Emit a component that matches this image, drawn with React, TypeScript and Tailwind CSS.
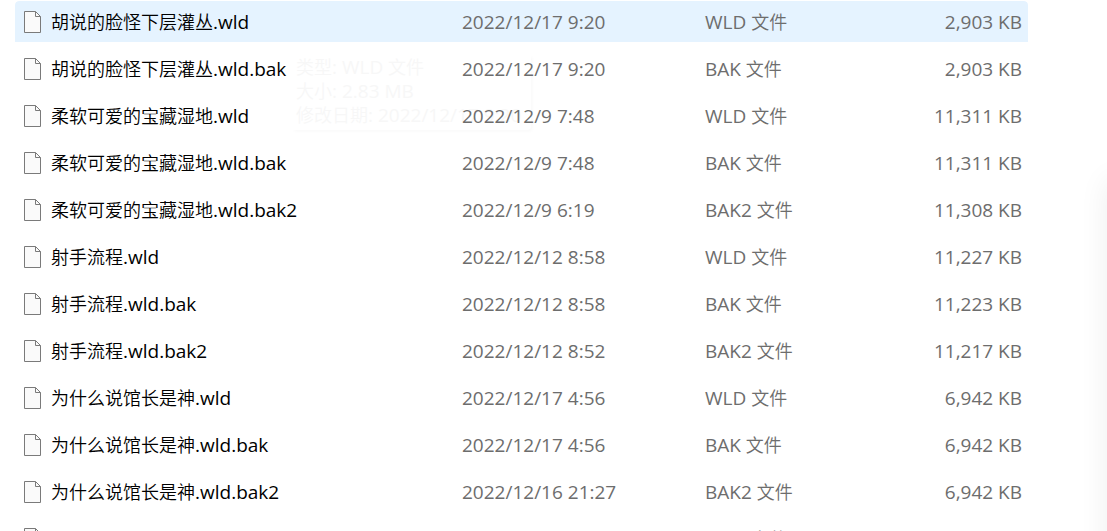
import { Fragment } from "react";

const files = [
  { name: "胡说的脸怪下层灌丛.wld", date: "2022/12/17 9:20", type: "WLD 文件", size: "2,903 KB" },
  { name: "胡说的脸怪下层灌丛.wld.bak", date: "2022/12/17 9:20", type: "BAK 文件", size: "2,903 KB" },
  { name: "柔软可爱的宝藏湿地.wld", date: "2022/12/9 7:48", type: "WLD 文件", size: "11,311 KB" },
  { name: "柔软可爱的宝藏湿地.wld.bak", date: "2022/12/9 7:48", type: "BAK 文件", size: "11,311 KB" },
  { name: "柔软可爱的宝藏湿地.wld.bak2", date: "2022/12/9 6:19", type: "BAK2 文件", size: "11,308 KB" },
  { name: "射手流程.wld", date: "2022/12/12 8:58", type: "WLD 文件", size: "11,227 KB" },
  { name: "射手流程.wld.bak", date: "2022/12/12 8:58", type: "BAK 文件", size: "11,223 KB" },
  { name: "射手流程.wld.bak2", date: "2022/12/12 8:52", type: "BAK2 文件", size: "11,217 KB" },
  { name: "为什么说馆长是神.wld", date: "2022/12/17 4:56", type: "WLD 文件", size: "6,942 KB" },
  { name: "为什么说馆长是神.wld.bak", date: "2022/12/17 4:56", type: "BAK 文件", size: "6,942 KB" },
  { name: "为什么说馆长是神.wld.bak2", date: "2022/12/16 21:27", type: "BAK2 文件", size: "6,942 KB" },
  { name: "", date: "", type: "WLD 文件", size: "" },
];

const FileIcon = () => (
  <svg width="17" height="22" viewBox="0 0 17 22" className="shrink-0" aria-hidden="true">
    <path d="M.5.5H11.5L16.5 5.5V21.5H.5Z" fill="#fafafa" stroke="#7a7a7a" />
    <path d="M11.5.5V5.5H16.5" fill="none" stroke="#7a7a7a" />
  </svg>
);

// latin runs are set one step larger than the chinese ones
const Mixed = ({ text }: { text: string }) => (
  <>
    {text.split(/([\u4e00-\u9fff]+)/).map((part, i) =>
      i % 2 ? (
        <span key={i} className="text-[18px] font-[350]">{part}</span>
      ) : (
        <Fragment key={i}>{part}</Fragment>
      )
    )}
  </>
);

const App = () => {
  return (
    <main className="relative h-screen overflow-hidden bg-white pt-px pl-[15px] pr-[79px] text-[19px] leading-6 text-[#6d6d6d] font-['Open_Sans','Noto_Sans_CJK_SC',sans-serif]">
      <div
        role="tooltip"
        className="absolute left-[291px] top-[54px] w-[240px] rounded-sm pl-[5px] pt-px pb-[3px] whitespace-nowrap overflow-hidden text-[#f7f7f7] shadow-[2px_2px_3px_rgba(0,0,0,0.02)]"
      >
        <p><Mixed text="类型: WLD 文件" /></p>
        <p><Mixed text="大小: 2.83 MB" /></p>
        <p><Mixed text="修改日期: 2022/12/17 9:20" /></p>
      </div>

      <table className="relative w-full table-fixed border-separate border-spacing-0">
        <colgroup>
          <col className="w-[447px]" />
          <col className="w-[243px]" />
          <col />
          <col />
        </colgroup>
        <tbody className="[&_td]:h-[47px] [&_td]:border-b-[6px] [&_td]:border-transparent [&_td]:bg-clip-padding [&_td]:whitespace-nowrap [&>tr:first-child>td]:bg-[#e5f3ff]">
          {files.map((file, i) => (
            <tr key={i}>
              <td className="rounded-l-sm pl-[9px] text-black">
                <div className="flex items-center gap-[10px]">
                  <FileIcon />
                  <span><Mixed text={file.name} /></span>
                </div>
              </td>
              <td>{file.date}</td>
              <td><Mixed text={file.type} /></td>
              <td className="rounded-r-sm pr-[6px] text-right">{file.size}</td>
            </tr>
          ))}
        </tbody>
      </table>

      {/* shadow of the window next to this one */}
      <div className="absolute left-full top-[180px] -bottom-20 w-20 shadow-[0_0_30px_rgba(0,0,0,0.07)]" />
    </main>
  );
};

export default App;
